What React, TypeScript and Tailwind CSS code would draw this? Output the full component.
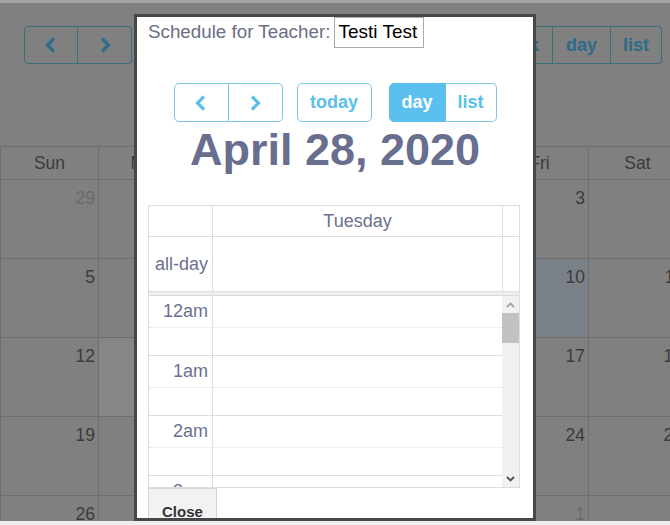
import React from "react";

const Chev = ({ dir, color, w = 14, h = 16, sw = 3.2 }: { dir: "l" | "r"; color: string; w?: number; h?: number; sw?: number }) => (
  <svg width={w} height={h} viewBox="0 0 14 16" fill="none">
    {dir === "l" ? (
      <polyline points="10,1.5 3.5,8 10,14.5" stroke={color} strokeWidth={sw} strokeLinecap="butt" strokeLinejoin="miter" />
    ) : (
      <polyline points="4,1.5 10.5,8 4,14.5" stroke={color} strokeWidth={sw} strokeLinecap="butt" strokeLinejoin="miter" />
    )}
  </svg>
);

const rows: { n: number; o?: boolean; bg?: string }[][] = [
  [{ n: 29, o: true }, { n: 30, o: true }, { n: 31, o: true }, { n: 1 }, { n: 2 }, { n: 3 }, { n: 4 }],
  [{ n: 5 }, { n: 6 }, { n: 7 }, { n: 8 }, { n: 9 }, { n: 10, bg: "bg-[#7b8188]" }, { n: 11 }],
  [{ n: 12 }, { n: 13, bg: "bg-[#868686]" }, { n: 14 }, { n: 15 }, { n: 16 }, { n: 17 }, { n: 18 }],
  [{ n: 19 }, { n: 20 }, { n: 21 }, { n: 22 }, { n: 23 }, { n: 24 }, { n: 25 }],
  [{ n: 26 }, { n: 27 }, { n: 28 }, { n: 29 }, { n: 30 }, { n: 1, o: true }, { n: 2, o: true }],
];

const days = ["Sun", "Mon", "Tue", "Wed", "Thu", "Fri", "Sat"];

function Background() {
  return (
    <div className="w-[686px] shrink-0">
      <div className="flex justify-between px-[24px] pt-[23px]">
        <div className="flex">
          <div className="w-[54px] h-[38px] border border-[#3d6b80] rounded-l-[4px] flex items-center justify-center">
            <Chev dir="l" color="#2f6c8c" />
          </div>
          <div className="w-[54px] h-[38px] border border-l-0 border-[#3d6b80] rounded-r-[4px] flex items-center justify-center">
            <Chev dir="r" color="#2f6c8c" />
          </div>
        </div>
        <div className="flex text-[18px] font-bold text-[#2e6b8a]">
          <div className="h-[38px] px-[13px] border border-[#3d6b80] rounded-l-[4px] flex items-center">month</div>
          <div className="h-[38px] px-[13px] border border-l-0 border-[#3d6b80] flex items-center">week</div>
          <div className="h-[38px] px-[13px] border border-l-0 border-[#3d6b80] flex items-center">day</div>
          <div className="h-[38px] px-[12px] border border-l-0 border-[#3d6b80] rounded-r-[4px] flex items-center">list</div>
        </div>
      </div>
      <div className="mt-[82px]">
        <div className="grid grid-cols-[repeat(7,98px)] h-[34px] border-t border-b border-[#6e6e6e]">
          {days.map((d) => (
            <div key={d} className="border-l border-[#6e6e6e] flex items-center justify-center text-[17.5px] text-[#3b3b3b]">
              {d}
            </div>
          ))}
        </div>
        {rows.map((r, i) => (
          <div key={i} className="grid grid-cols-[repeat(7,98px)] h-[79px] border-b border-[#6e6e6e]">
            {r.map((c, j) => (
              <div
                key={j}
                className={`border-l border-[#6e6e6e] pt-[8px] pr-[3px] text-right text-[17.5px] leading-[20px] ${c.o ? "text-[#6a6a6a]" : "text-[#3b3b3b]"} ${c.bg ?? ""}`}
              >
                {c.n}
              </div>
            ))}
          </div>
        ))}
      </div>
    </div>
  );
}

const btnBase = "h-[39px] border border-[#7ac8ea] flex items-center justify-center text-[18px] font-bold text-[#5bbfe9]";

function Modal() {
  const hours = ["12am", "1am", "2am", "3am"];
  return (
    <div className="absolute left-[134px] top-[14px] w-[402px] h-[507px] border-[3px] border-[#474747] bg-white overflow-hidden">
      <div className="pl-[11px] flex items-center h-[31px]">
        <span className="text-[18.8px] text-[#6a6e86] whitespace-nowrap">Schedule for Teacher:</span>
        <div className="ml-[4px] w-[90px] h-[31px] border border-[#a9a9a9] pl-[3px] flex items-center text-[19px] text-black whitespace-nowrap overflow-hidden">
          Testi Test
        </div>
      </div>
      <div className="mt-[35px] flex justify-center">
        <div className="flex">
          <div className={`${btnBase} w-[55px] rounded-l-[5px]`}>
            <Chev dir="l" color="#5bbfe9" />
          </div>
          <div className={`${btnBase} w-[54px] border-l-0 rounded-r-[5px]`}>
            <Chev dir="r" color="#5bbfe9" />
          </div>
        </div>
        <div className={`${btnBase} ml-[14px] w-[75px] rounded-[5px]`}>today</div>
        <div className="flex ml-[17px]">
          <div className="h-[39px] w-[57px] border border-[#5bc0ee] bg-[#5bc0ee] rounded-l-[5px] flex items-center justify-center text-[18px] font-bold text-white">
            day
          </div>
          <div className={`${btnBase} w-[51px] border-l-0 rounded-r-[5px]`}>list</div>
        </div>
      </div>
      <div className="mt-[5px] h-[45px] leading-[45px] text-center text-[45px] font-bold text-[#676e8e] whitespace-nowrap">
        April 28, 2020
      </div>
      <div className="ml-[11px] mt-[33px] w-[372px] border border-[#dddddd]">
        <div className="flex h-[31px] border-b border-[#dddddd]">
          <div className="w-[64px] border-r border-[#dddddd]" />
          <div className="w-[290px] border-r border-[#dddddd] flex items-center justify-center text-[18px] text-[#6b7090]">
            Tuesday
          </div>
          <div className="w-[16px]" />
        </div>
        <div className="flex h-[55px] border-b border-[#dddddd]">
          <div className="w-[64px] border-r border-[#dddddd] flex items-center justify-end pr-[4px] text-[18px] text-[#6b7090]">
            all-day
          </div>
          <div className="w-[290px] border-r border-[#dddddd]" />
          <div className="w-[16px]" />
        </div>
        <div className="h-[4px] bg-[#eeeeee] border-b border-[#dddddd]" />
        <div className="flex h-[191px] overflow-hidden">
          <div className="flex flex-col w-[353px] shrink-0">
            {hours.map((h) => (
              <div key={h} className="shrink-0">
                <div className="flex h-[32px] border-b border-dotted border-[#dddddd]">
                  <div className="w-[64px] border-r border-[#dddddd] text-right pr-[4px] pt-[5px] text-[18px] leading-[21px] text-[#6b7090]">
                    {h}
                  </div>
                  <div className="flex-1" />
                </div>
                <div className="flex h-[28px] border-b border-[#dddddd]">
                  <div className="w-[64px] border-r border-[#dddddd]" />
                  <div className="flex-1" />
                </div>
              </div>
            ))}
          </div>
          <div className="w-[17px] bg-[#f1f1f1] flex flex-col shrink-0">
            <div className="h-[17px] flex items-center justify-center">
              <svg width="9" height="6" viewBox="0 0 9 6" fill="none">
                <polyline points="1,5 4.5,1.5 8,5" stroke="#a3a3a3" strokeWidth="1.8" />
              </svg>
            </div>
            <div className="h-[30px] bg-[#c1c1c1]" />
            <div className="flex-1" />
            <div className="h-[17px] flex items-center justify-center">
              <svg width="9" height="6" viewBox="0 0 9 6" fill="none">
                <polyline points="1,1 4.5,4.5 8,1" stroke="#505050" strokeWidth="1.8" />
              </svg>
            </div>
          </div>
        </div>
      </div>
      <div className="ml-[11px] inline-flex border border-[#d6d6d6] bg-[#f2f2f2] px-[13px] pt-[14px] pb-[14px] text-[15px] leading-[17px] font-bold text-[#333333]">
        Close
      </div>
    </div>
  );
}

export default function App() {
  return (
    <div className="relative w-[670px] h-[525px] overflow-hidden bg-[#808080] font-['Liberation_Sans',Arial,sans-serif] flex flex-col">
      <div className="h-[3px] bg-[#a3a3a3] shrink-0" />
      <div className="flex-1 overflow-hidden">
        <Background />
      </div>
      <div className="h-[4px] bg-[#efefef] shrink-0" />
      <Modal />
    </div>
  );
}
